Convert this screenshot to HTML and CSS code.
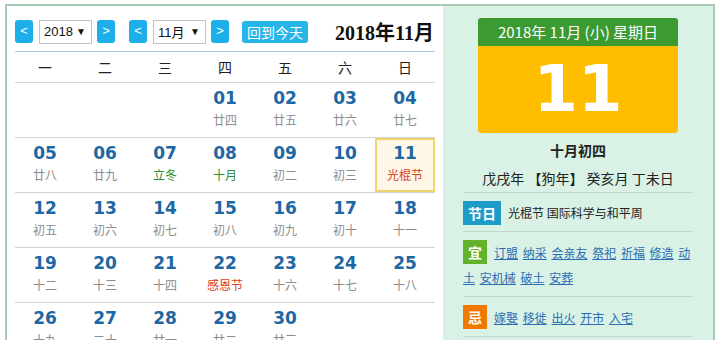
FILE: index.html
```html
<!DOCTYPE html>
<html>
    <head>
        <title>万年历</title>
        <link rel="stylesheet" href="styles.css">
    </head>
    <body>
        <main class="cal">
            <section class="month">
                <div class="bar">
                    <span class="btn">&lt;</span>
                    <span class="sel">2018<i>▼</i></span>
                    <span class="btn">&gt;</span>
                    <span class="btn gap">&lt;</span>
                    <span class="sel">11月<i>▼</i></span>
                    <span class="btn">&gt;</span>
                    <span class="today-btn">回到今天</span>
                    <h1 class="title">2018年11月</h1>
                </div>
                <div class="week">
                    <span>一</span><span>二</span><span>三</span><span>四</span><span>五</span><span>六</span><span>日</span>
                </div>
                <div class="row">
                    <div class="day"></div>
                    <div class="day"></div>
                    <div class="day"></div>
                    <div class="day"><b>01</b><em>廿四</em></div>
                    <div class="day"><b>02</b><em>廿五</em></div>
                    <div class="day"><b>03</b><em>廿六</em></div>
                    <div class="day"><b>04</b><em>廿七</em></div>
                </div>
                <div class="row">
                    <div class="day"><b>05</b><em>廿八</em></div>
                    <div class="day"><b>06</b><em>廿九</em></div>
                    <div class="day"><b>07</b><em class="term">立冬</em></div>
                    <div class="day"><b>08</b><em class="term">十月</em></div>
                    <div class="day"><b>09</b><em>初二</em></div>
                    <div class="day"><b>10</b><em>初三</em></div>
                    <div class="day now"><b>11</b><em class="fest">光棍节</em></div>
                </div>
                <div class="row">
                    <div class="day"><b>12</b><em>初五</em></div>
                    <div class="day"><b>13</b><em>初六</em></div>
                    <div class="day"><b>14</b><em>初七</em></div>
                    <div class="day"><b>15</b><em>初八</em></div>
                    <div class="day"><b>16</b><em>初九</em></div>
                    <div class="day"><b>17</b><em>初十</em></div>
                    <div class="day"><b>18</b><em>十一</em></div>
                </div>
                <div class="row">
                    <div class="day"><b>19</b><em>十二</em></div>
                    <div class="day"><b>20</b><em>十三</em></div>
                    <div class="day"><b>21</b><em>十四</em></div>
                    <div class="day"><b>22</b><em class="fest">感恩节</em></div>
                    <div class="day"><b>23</b><em>十六</em></div>
                    <div class="day"><b>24</b><em>十七</em></div>
                    <div class="day"><b>25</b><em>十八</em></div>
                </div>
                <div class="row">
                    <div class="day"><b>26</b><em>十九</em></div>
                    <div class="day"><b>27</b><em>二十</em></div>
                    <div class="day"><b>28</b><em>廿一</em></div>
                    <div class="day"><b>29</b><em>廿二</em></div>
                    <div class="day"><b>30</b><em>廿三</em></div>
                    <div class="day"></div>
                    <div class="day"></div>
                </div>
            </section>
            <aside class="info">
                <div class="card">
                    <div class="card-head">2018年 11月 (小) 星期日</div>
                    <div class="card-num">11</div>
                </div>
                <p class="lunar">十月初四</p>
                <p class="ganzhi">戊戌年 【狗年】 癸亥月 丁未日</p>
                <div class="item">
                    <span class="tag blue">节日</span>光棍节 国际科学与和平周
                </div>
                <div class="item">
                    <span class="tag green">宜</span>
                    <p class="links"><a href="#">订盟</a> <a href="#">纳采</a> <a href="#">会亲友</a> <a href="#">祭祀</a> <a href="#">祈福</a> <a href="#">修造</a> <a href="#" class="cut">动</a><a href="#">土</a> <a href="#">安机械</a> <a href="#">破土</a> <a href="#">安葬</a></p>
                </div>
                <div class="item">
                    <span class="tag orange">忌</span>
                    <p class="links"><a href="#">嫁娶</a> <a href="#">移徙</a> <a href="#">出火</a> <a href="#">开市</a> <a href="#">入宅</a></p>
                </div>
            </aside>
        </main>
    </body>
</html>
```
FILE: styles.css
```css
body{
    margin:0;
    padding:0;
    background-color:#fff;
    font-family:"Noto Sans CJK SC", sans-serif;
    color:#333;
}
.cal{
    display:flex;
    width:706px;
    height:400px;
    margin:4px 0 0 5px;
    border:2px solid #a8cab2;
    border-bottom:none;
}
.month{
    width:420px;
    padding:0 8px;
    background-color:#fff;
}
.bar{
    display:flex;
    align-items:center;
    height:23px;
    padding:14px 0 8px;
    border-bottom:1px solid #b4c6e2;
}
.btn{
    width:18px;
    height:23px;
    line-height:22px;
    margin-right:6px;
    text-align:center;
    font-family:"Liberation Sans", sans-serif;
    font-size:13px;
    color:#fff;
    background-color:#1cafea;
    border-radius:3px;
}
.btn.gap{
    margin-left:8px;
}
.sel{
    display:flex;
    justify-content:space-between;
    align-items:center;
    box-sizing:border-box;
    width:53px;
    height:24px;
    margin-right:5px;
    padding:0 5px 0 4px;
    border:1px solid #c4c4c4;
    font-family:"Liberation Sans", "Noto Sans CJK SC", sans-serif;
    font-size:13px;
    color:#111;
}
.sel i{
    font-style:normal;
    font-size:10px;
}
.today-btn{
    margin-left:7px;
    padding:0 5px;
    height:22px;
    line-height:22px;
    font-size:14px;
    color:#fff;
    background-color:#27b4e8;
    border-radius:3px;
}
.title{
    margin:0 1px 0 auto;
    font-family:"Liberation Serif", "Noto Sans CJK SC", serif;
    font-size:20px;
    font-weight:bold;
    color:#111;
}
.week{
    display:grid;
    grid-template-columns:repeat(7, 60px);
    height:30px;
    line-height:30px;
    text-align:center;
    font-size:14px;
    color:#222;
    border-bottom:1px solid #d4d4d4;
}
.row{
    display:grid;
    grid-template-columns:repeat(7, 60px);
    border-bottom:1px solid #d4d4d4;
}
.day{
    box-sizing:border-box;
    height:54px;
    padding-top:5px;
    text-align:center;
}
.day b{
    display:block;
    line-height:20px;
    font-family:"DejaVu Sans", sans-serif;
    font-size:17px;
    color:#1d68a4;
}
.day em{
    display:block;
    margin-top:3px;
    line-height:18px;
    font-style:normal;
    font-size:12px;
    color:#8c8c8c;
}
.day em.term{
    color:#2d8d2d;
}
.day em.fest{
    color:#d2401e;
}
.day.now{
    padding-top:3px;
    border:2px solid #f1d46c;
    background-color:#fff8e8;
}
.info{
    flex:1;
    padding:0 20px;
    background-color:#d9f2e5;
}
.card{
    width:200px;
    margin:12px auto 0;
}
.card-head{
    height:28px;
    line-height:28px;
    text-align:center;
    font-size:15px;
    color:#fff;
    background-color:#3c9a33;
    border-radius:3px 3px 0 0;
}
.card-num{
    height:87px;
    line-height:87px;
    text-align:center;
    font-family:"DejaVu Sans", sans-serif;
    font-size:64px;
    font-weight:bold;
    color:#fff;
    background-color:#ffbd00;
    border-radius:0 0 4px 4px;
}
.lunar{
    margin:7px 0 0;
    line-height:20px;
    text-align:center;
    font-size:14px;
    font-weight:bold;
    color:#222;
}
.ganzhi{
    margin:8px 0 0;
    padding-bottom:4px;
    line-height:20px;
    text-align:center;
    font-size:14px;
    color:#222;
    border-bottom:1px solid #c3d9cb;
}
.item{
    display:flow-root;
    padding:8px 0 6px;
    line-height:24px;
    font-size:12px;
    color:#222;
    border-bottom:1px solid #c3d9cb;
}
.links{
    margin:0 -6px 0 0;
    line-height:25px;
    word-break:break-all;
}
.links a{
    margin-right:2px;
    color:#2a6db3;
}
.links a.cut{
    margin-right:0;
}
.tag{
    float:left;
    height:24px;
    line-height:24px;
    margin-right:7px;
    padding:0 5px;
    font-size:14px;
    font-weight:bold;
    color:#fff;
}
.tag.blue{
    background-color:#1e9cc8;
}
.tag.green{
    background-color:#62b32a;
}
.tag.orange{
    background-color:#f07a00;
}
```
